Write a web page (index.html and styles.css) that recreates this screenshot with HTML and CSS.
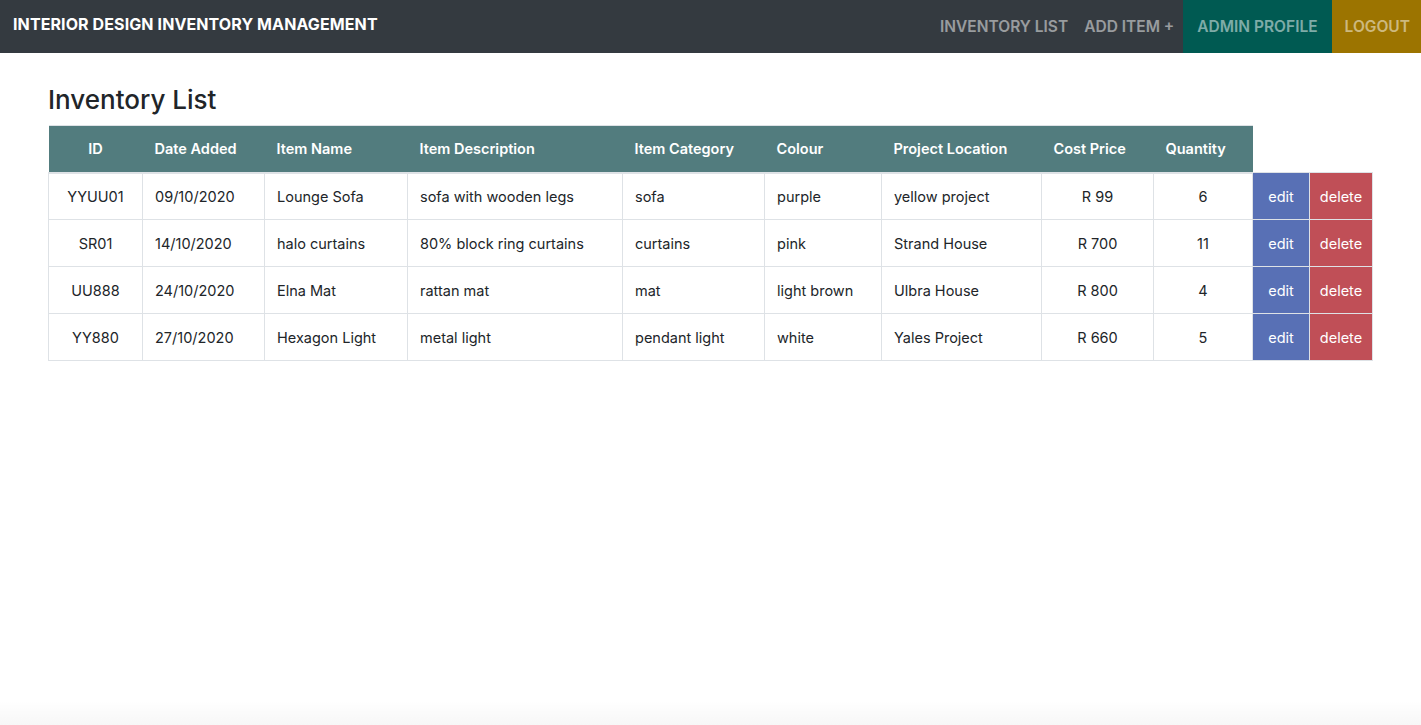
FILE: index.html
```html
<!DOCTYPE html>
<html lang="en">
<head>
<meta charset="utf-8">
<title>Inventory List</title>
<link rel="stylesheet" href="styles.css">
</head>
<body>
<div class="page">
  <nav class="navbar">
    <div class="brand">INTERIOR DESIGN INVENTORY MANAGEMENT</div>
    <div class="nav-links">
      <a class="nav-link" href="#">INVENTORY LIST</a>
      <a class="nav-link" href="#">ADD ITEM +</a>
      <a class="nav-link admin" href="#">ADMIN PROFILE</a>
      <a class="nav-link logout" href="#">LOGOUT</a>
    </div>
  </nav>
  <main class="content">
    <h2 class="title">Inventory List</h2>
    <table class="inv">
      <thead>
        <tr>
          <th class="c-id center">ID</th>
          <th class="c-date">Date Added</th>
          <th class="c-name">Item Name</th>
          <th class="c-desc">Item Description</th>
          <th class="c-cat">Item Category</th>
          <th class="c-col">Colour</th>
          <th class="c-loc">Project Location</th>
          <th class="c-cost">Cost Price</th>
          <th class="c-qty">Quantity</th>
        </tr>
      </thead>
      <tbody>
        <tr>
          <td class="center">YYUU01</td><td>09/10/2020</td><td>Lounge Sofa</td><td>sofa with wooden legs</td><td>sofa</td><td>purple</td><td>yellow project</td><td class="center">R 99</td><td class="center">6</td>
          <td class="btn edit">edit</td><td class="btn delete">delete</td>
        </tr>
        <tr>
          <td class="center">SR01</td><td>14/10/2020</td><td>halo curtains</td><td>80% block ring curtains</td><td>curtains</td><td>pink</td><td>Strand House</td><td class="center">R 700</td><td class="center">11</td>
          <td class="btn edit">edit</td><td class="btn delete">delete</td>
        </tr>
        <tr>
          <td class="center">UU888</td><td>24/10/2020</td><td>Elna Mat</td><td>rattan mat</td><td>mat</td><td>light brown</td><td>Ulbra House</td><td class="center">R 800</td><td class="center">4</td>
          <td class="btn edit">edit</td><td class="btn delete">delete</td>
        </tr>
        <tr>
          <td class="center">YY880</td><td>27/10/2020</td><td>Hexagon Light</td><td>metal light</td><td>pendant light</td><td>white</td><td>Yales Project</td><td class="center">R 660</td><td class="center">5</td>
          <td class="btn edit">edit</td><td class="btn delete">delete</td>
        </tr>
      </tbody>
    </table>
  </main>
  <div class="footer-shade"></div>
</div>
</body>
</html>
```
FILE: styles.css
```css
* { box-sizing: border-box; }
html, body { margin: 0; padding: 0; }
body {
  font-family: Inter, "Noto Sans", "Liberation Sans", sans-serif;
  color: #212529;
  background: #fff;
}
.page {
  min-height: 100vh;
  display: flex;
  flex-direction: column;
}
.navbar {
  height: 53px;
  background: #343a40;
  display: flex;
  justify-content: space-between;
  align-items: stretch;
}
.brand {
  color: #fff;
  font-weight: 700;
  font-size: 16px;
  padding: 14px 0 0 13px;
  letter-spacing: 0.1px;
}
.nav-link {
  display: flex;
  align-items: center;
  padding: 0 8px;
  color: rgba(255,255,255,0.5);
  text-decoration: none;
  font-weight: 600;
  font-size: 15.5px;
}
.nav-links {
  display: flex;
  align-items: stretch;
}
.nav-link.admin {
  background: #005a52;
  padding: 0 14px;
  margin-left: 1px;
}
.nav-link.logout {
  background: #9c7400;
  padding: 0 11px 0 13px;
}
.content {
  flex: 1;
  padding: 0 48px;
}
.title {
  margin: 31px 0 9px;
  font-size: 26px;
  font-weight: 500;
  line-height: 32px;
}
.inv {
  border-collapse: collapse;
  font-size: 14.5px;
}
.inv th {
  background: #527c7e;
  color: #fff;
  font-weight: 600;
  font-size: 14.5px;
  text-align: left;
  height: 47px;
  padding: 0 12px;
  border-top: 1px solid #dee2e6;
  border-bottom: 2px solid #dee2e6;
}
.inv td {
  height: 47px;
  padding: 0 12px;
  border: 1px solid #dee2e6;
  white-space: nowrap;
}
.inv .center { text-align: center; }
.c-id { width: 94px; }
.c-date { width: 122px; }
.c-name { width: 143px; }
.c-desc { width: 215px; }
.c-cat { width: 142px; }
.c-col { width: 117px; }
.c-loc { width: 160px; }
.c-cost { width: 112px; }
.c-qty { width: 99px; }
.inv td.btn {
  color: #fff;
  text-align: center;
  padding: 0;
}
.inv td.edit { background: #5870b5; width: 57px; }
.inv td.delete { background: #c04f57; width: 63px; }
.footer-shade {
  height: 25px;
  background: linear-gradient(to bottom, rgba(0,0,0,0), rgba(0,0,0,0.03));
}
```
